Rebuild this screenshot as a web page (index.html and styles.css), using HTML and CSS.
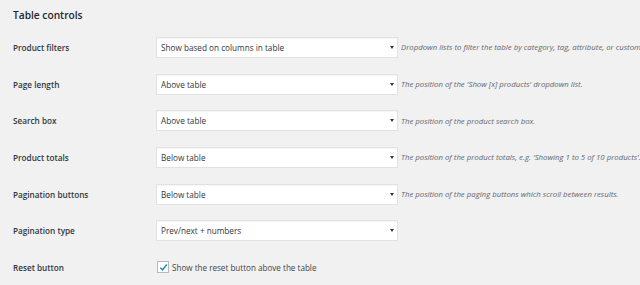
FILE: index.html
```html
<!DOCTYPE html>
<html lang="en">
<head>
  <meta charset="UTF-8">
  <title>Table controls</title>
  <link rel="stylesheet" href="styles.css">
</head>
<body>
  <h2>Table controls</h2>

  <table class="form-table">
    <tr>
      <th>Product filters</th>
      <td>
        <div class="field">
          <div class="select"><span>Show based on columns in table</span><i class="arrow"></i></div>
          <span class="desc">Dropdown lists to filter the table by category, tag, attribute, or custom</span>
        </div>
      </td>
    </tr>
    <tr>
      <th>Page length</th>
      <td>
        <div class="field">
          <div class="select"><span>Above table</span><i class="arrow"></i></div>
          <span class="desc">The position of the 'Show [x] products' dropdown list.</span>
        </div>
      </td>
    </tr>
    <tr>
      <th>Search box</th>
      <td>
        <div class="field">
          <div class="select"><span>Above table</span><i class="arrow"></i></div>
          <span class="desc">The position of the product search box.</span>
        </div>
      </td>
    </tr>
    <tr>
      <th>Product totals</th>
      <td>
        <div class="field">
          <div class="select"><span>Below table</span><i class="arrow"></i></div>
          <span class="desc">The position of the product totals, e.g. 'Showing 1 to 5 of 10 products'.</span>
        </div>
      </td>
    </tr>
    <tr>
      <th>Pagination buttons</th>
      <td>
        <div class="field">
          <div class="select"><span>Below table</span><i class="arrow"></i></div>
          <span class="desc">The position of the paging buttons which scroll between results.</span>
        </div>
      </td>
    </tr>
    <tr>
      <th>Pagination type</th>
      <td>
        <div class="field">
          <div class="select"><span>Prev/next + numbers</span><i class="arrow"></i></div>
        </div>
      </td>
    </tr>
    <tr>
      <th>Reset button</th>
      <td>
        <label class="check">
          <span class="box">
            <svg width="9" height="9" viewBox="0 0 10 10"><path d="M1.5 5.2 L4 7.6 L8.6 1.6" fill="none" stroke="#1e8cbe" stroke-width="1.6"/></svg>
          </span>
          Show the reset button above the table
        </label>
      </td>
    </tr>
  </table>
</body>
</html>
```

FILE: styles.css
```css
body { margin: 0; padding: 0 13px; background: #f1f1f1; font-family: "Open Sans", "Noto Sans", sans-serif; color: #23282d; overflow: hidden; }
h2 { font-size: 10.2px; font-weight: 600; margin: 0; padding-top: 7px; height: 22px; line-height: 16px; }
.form-table { border-collapse: collapse; table-layout: fixed; width: 627px; }
.form-table th { width: 143px; padding: 0; text-align: left; font-size: 8.2px; font-weight: 600; color: #32373c; height: 36.7px; vertical-align: middle; }
.form-table td { padding: 0; vertical-align: middle; }
.field { display: flex; align-items: center; }
.select { flex: none; width: 232px; height: 19px; background: #fff; border: 1px solid #e2e2e2; box-shadow: inset 0 1px 1px rgba(0,0,0,0.04); display: flex; align-items: center; justify-content: space-between; padding: 0 4px; box-sizing: content-box; font-size: 8.2px; color: #32373c; }
.arrow { width: 0; height: 0; border-left: 2.5px solid transparent; border-right: 2.5px solid transparent; border-top: 3.5px solid #333; margin-right: -1px; }
.desc { font-size: 7.8px; font-style: italic; color: #62686e; margin-left: 3px; white-space: nowrap; }
.check { display: flex; align-items: center; font-size: 8.1px; color: #444; margin-left: 1px; }
.box { width: 10px; height: 10px; background: #fff; border: 1px solid #b4b9be; display: flex; align-items: center; justify-content: center; margin-right: 3px; }
```
